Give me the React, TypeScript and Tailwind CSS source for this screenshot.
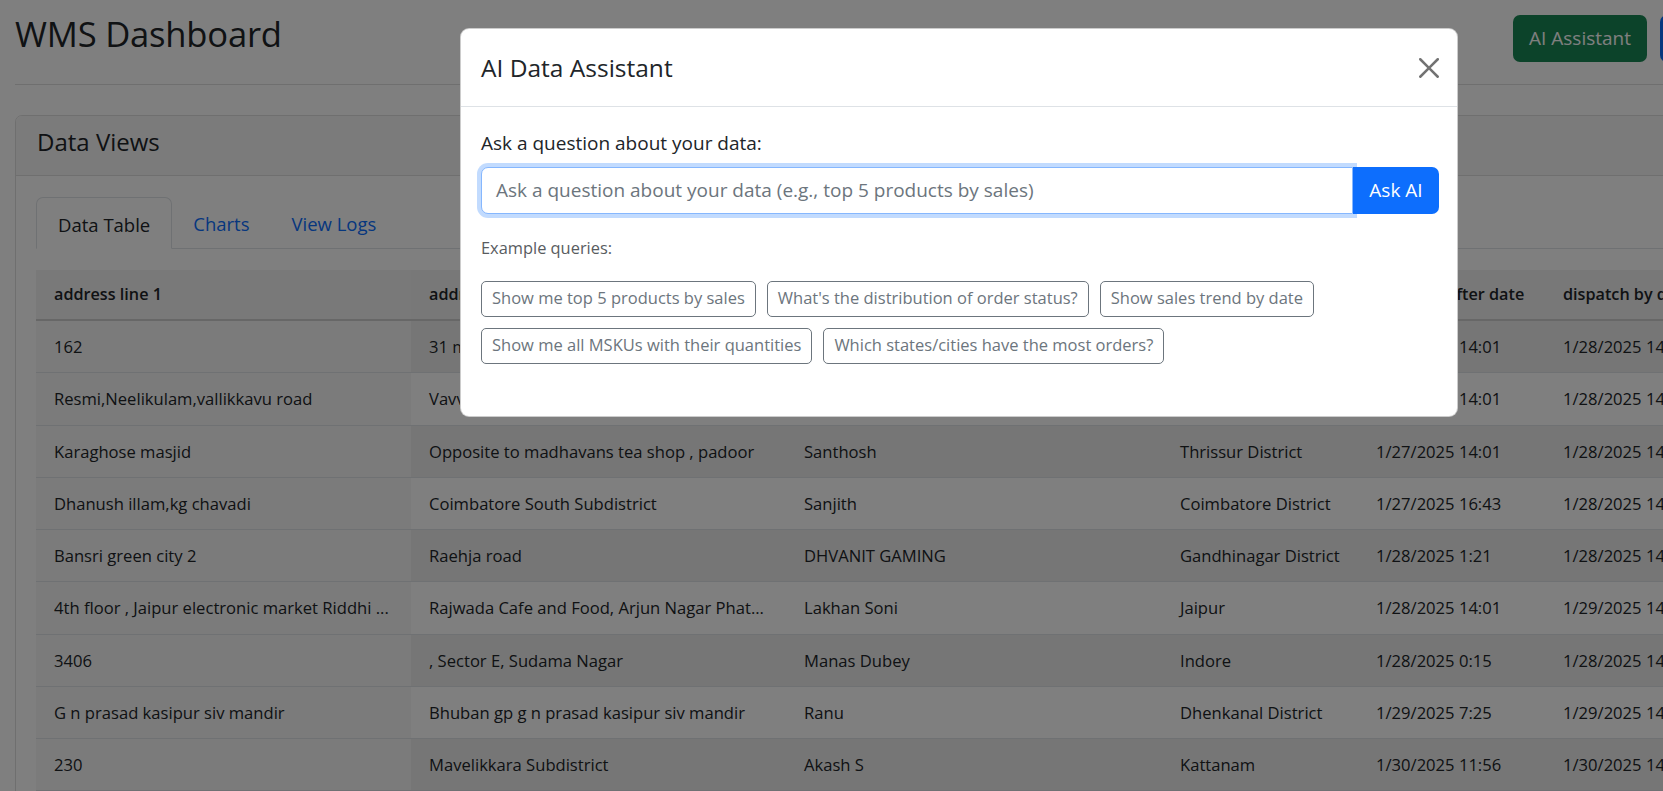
import React from "react";

const rows: string[][] = [
  ["162", "31 main road, near church", "Rahul", "Kochi", "1/27/2025 14:01", "1/28/2025 14:01"],
  ["Resmi,Neelikulam,vallikkavu road", "Vavvakkavu", "Resmi", "Kollam", "1/27/2025 14:01", "1/28/2025 14:01"],
  ["Karaghose masjid", "Opposite to madhavans tea shop , padoor", "Santhosh", "Thrissur District", "1/27/2025 14:01", "1/28/2025 14:01"],
  ["Dhanush illam,kg chavadi", "Coimbatore South Subdistrict", "Sanjith", "Coimbatore District", "1/27/2025 16:43", "1/28/2025 14:01"],
  ["Bansri green city 2", "Raehja road", "DHVANIT GAMING", "Gandhinagar District", "1/28/2025 1:21", "1/28/2025 14:01"],
  ["4th floor , Jaipur electronic market Riddhi ...", "Rajwada Cafe and Food, Arjun Nagar Phat...", "Lakhan Soni", "Jaipur", "1/28/2025 14:01", "1/29/2025 14:01"],
  ["3406", ", Sector E, Sudama Nagar", "Manas Dubey", "Indore", "1/28/2025 0:15", "1/28/2025 14:01"],
  ["G n prasad kasipur siv mandir", "Bhuban gp g n prasad kasipur siv mandir", "Ranu", "Dhenkanal District", "1/29/2025 7:25", "1/29/2025 14:01"],
  ["230", "Mavelikkara Subdistrict", "Akash S", "Kattanam", "1/30/2025 11:56", "1/30/2025 14:01"],
];

const headers = [
  "address line 1",
  "address line 2",
  "buyer name",
  "city",
  "dispatch after date",
  "dispatch by date",
];

const widths = ["w-[375px]", "w-[375px]", "w-[376px]", "w-[196px]", "w-[187px]", "w-[200px]"];

const examples = [
  "Show me top 5 products by sales",
  "What's the distribution of order status?",
  "Show sales trend by date",
  "Show me all MSKUs with their quantities",
  "Which states/cities have the most orders?",
];

export default function App() {
  return (
    <div className="relative w-[1663px] h-[791px] overflow-hidden bg-white text-[#212529] font-['Open_Sans','Noto_Sans',sans-serif]">
      {/* Page */}
      <div className="w-[1918px] px-[15px]">
        <div className="flex items-start pt-[12px] pb-[22px] border-b border-[#dedede]">
          <h2 className="m-0 text-[34.6px] leading-[44px] font-medium tracking-[-0.2px]">WMS Dashboard</h2>
          <div className="flex-1" />
          <div className="flex gap-[13px] mt-[3px]">
            <button className="h-[47px] w-[134px] rounded-[7px] bg-[#198754] text-white text-[19px]">AI Assistant</button>
            <button className="h-[47px] w-[243px] rounded-[7px] bg-[#0d6efd] text-white text-[19px]">Upload Data</button>
          </div>
        </div>

        <div className="mt-[30px] border border-[#dfdfdf] rounded-[7px] overflow-hidden">
          <div className="h-[60px] pt-[12px] pl-[21px] bg-[#f7f7f7] border-b border-[#dfdfdf]">
            <h5 className="m-0 text-[24px] leading-[28px] font-medium">Data Views</h5>
          </div>
          <div className="pt-[21px] px-[20px] pb-[40px]">
            <div className="flex border-b border-[#dee2e6] h-[52px]">
              <div className="relative -mb-px flex items-center px-[21px] pt-[3px] bg-white border border-[#dee2e6] border-b-white rounded-t-[7px] text-[18.5px]">
                Data Table
              </div>
              <div className="flex items-center px-[21px] pt-[3px] text-[18.5px] text-[#0d6efd]">Charts</div>
              <div className="flex items-center px-[21px] pt-[3px] text-[18.5px] text-[#0d6efd]">View Logs</div>
            </div>

            <table className="mt-[21px] border-collapse table-fixed text-[16.6px]">
              <thead>
                <tr className="bg-[#f0f0f0]">
                  {headers.map((h, i) => (
                    <th
                      key={h}
                      className={`${widths[i]} h-[50px] px-[18px] text-left font-semibold text-[16.2px] whitespace-nowrap border-b-2 border-[#cfcfcf] ${i === 0 ? "bg-[#f3f3f3]" : ""}`}
                    >
                      {h}
                    </th>
                  ))}
                </tr>
              </thead>
              <tbody>
                {rows.map((r, ri) => (
                  <tr key={ri} className={ri % 2 === 0 ? "bg-[#ededed]" : "bg-white"}>
                    {r.map((c, ci) => (
                      <td
                        key={ci}
                        className={`${widths[ci]} max-w-0 px-[18px] py-[12px] leading-[27.25px] whitespace-nowrap overflow-hidden text-ellipsis border-b border-[#dee2e6] ${ci === 0 ? "bg-[#f7f7f7]" : ""}`}
                      >
                        {c}
                      </td>
                    ))}
                  </tr>
                ))}
              </tbody>
            </table>
          </div>
        </div>
      </div>

      {/* Backdrop */}
      <div className="absolute inset-0 bg-black/50" />

      {/* Modal */}
      <div className="absolute left-[460px] top-[28px] w-[998px] bg-white border border-black/20 rounded-[9px]">
        <div className="h-[78px] flex items-center justify-between pl-[20px] pr-[18px] border-b border-[#dee2e6]">
          <h5 className="m-0 text-[24.5px] leading-[30px] font-medium">AI Data Assistant</h5>
          <button className="w-[20px] h-[20px] flex items-center justify-center" aria-label="Close">
            <svg width="20" height="20" viewBox="0 0 16 16" fill="#000" opacity="0.55">
              <path d="M.293.293a1 1 0 0 1 1.414 0L8 6.586 14.293.293a1 1 0 1 1 1.414 1.414L9.414 8l6.293 6.293a1 1 0 0 1-1.414 1.414L8 9.414l-6.293 6.293a1 1 0 0 1-1.414-1.414L6.586 8 .293 1.707a1 1 0 0 1 0-1.414" />
            </svg>
          </button>
        </div>
        <div className="pt-[23px] pl-[20px] pr-[18px] pb-[52px]">
          <div className="text-[19px] leading-[27.6px] mb-[9px]">Ask a question about your data:</div>
          <div className="flex h-[47px]">
            <div className="flex-1 flex items-center pl-[14px] border border-[#86b7fe] rounded-l-[7px] shadow-[0_0_0_4px_rgba(13,110,253,0.25)] text-[19px] text-[#6c757d] bg-white">
              Ask a question about your data (e.g., top 5 products by sales)
            </div>
            <button className="w-[86px] bg-[#0d6efd] text-white text-[19px] rounded-r-[7px]">Ask AI</button>
          </div>
          <div className="mt-[22px] text-[16.4px] leading-[24px] text-[#595c5f]">Example queries:</div>
          <div className="mt-[21px] flex flex-wrap gap-[11px]">
            {examples.map((e) => (
              <button
                key={e}
                className="h-[36px] px-[10px] border border-[#6c757d] rounded-[5px] text-[16.5px] text-[#6c757d] bg-white"
              >
                {e}
              </button>
            ))}
          </div>
        </div>
      </div>
    </div>
  );
}
